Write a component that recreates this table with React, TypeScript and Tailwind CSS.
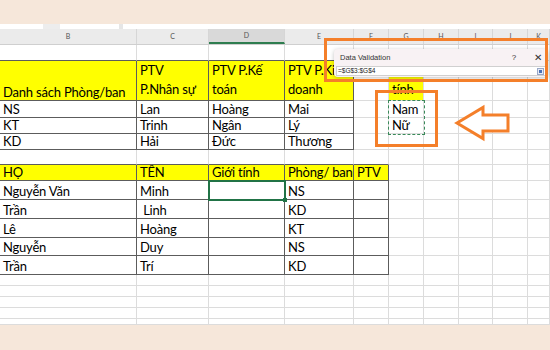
import React from "react";

const colW = [137, 72, 76, 69, 35, 35, 35, 34, 35, 22];
const colLetters = ["B", "C", "D", "E", "F", "G", "H", "I", "J", "K"];

type Cell = { t?: string; y?: boolean };
type Row = { h: number; cells?: Record<number, Cell> };

const rows: Row[] = [
  { h: 16 },
  {
    h: 40,
    cells: {
      0: { t: "Danh sách Phòng/ban", y: true },
      1: { t: "PTV\nP.Nhân sự", y: true },
      2: { t: "PTV P.Kế\ntoán", y: true },
      3: { t: "PTV P.Kinh\ndoanh", y: true },
      5: { t: "Giới\ntính", y: true },
    },
  },
  { h: 17, cells: { 0: { t: "NS" }, 1: { t: "Lan" }, 2: { t: "Hoàng" }, 3: { t: "Mai" }, 5: { t: "Nam" } } },
  { h: 16, cells: { 0: { t: "KT" }, 1: { t: "Trinh" }, 2: { t: "Ngân" }, 3: { t: "Lý" }, 5: { t: "Nữ" } } },
  { h: 16, cells: { 0: { t: "KD" }, 1: { t: "Hải" }, 2: { t: "Đức" }, 3: { t: "Thương" } } },
  { h: 15 },
  {
    h: 16,
    cells: {
      0: { t: "HỌ", y: true },
      1: { t: "TÊN", y: true },
      2: { t: "Giới tính", y: true },
      3: { t: "Phòng/ ban", y: true },
      4: { t: "PTV", y: true },
    },
  },
  { h: 19, cells: { 0: { t: "Nguyễn Văn" }, 1: { t: "Minh" }, 3: { t: "NS" } } },
  { h: 19, cells: { 0: { t: "Trần" }, 1: { t: " Linh" }, 3: { t: "KD" } } },
  { h: 19, cells: { 0: { t: "Lê" }, 1: { t: "Hoàng" }, 3: { t: "KT" } } },
  { h: 18, cells: { 0: { t: "Nguyễn" }, 1: { t: "Duy" }, 3: { t: "NS" } } },
  { h: 19, cells: { 0: { t: "Trần" }, 1: { t: "Trí" }, 3: { t: "KD" } } },
  { h: 11 },
  { h: 11 },
  { h: 11 },
  { h: 11 },
  { h: 6 },
];

function dark(r: number, c: number) {
  if (r >= 1 && r <= 4 && c >= 0 && c <= 3) return true;
  if (r >= 6 && r <= 11 && c >= 0 && c <= 4) return true;
  return false;
}

function GridCell({ r, c, row }: { r: number; c: number; row: Row }) {
  const cell = row.cells?.[c];
  const bDark = dark(r, c) || dark(r + 1, c);
  const rDark = dark(r, c) || dark(r, c + 1);
  const multi = cell?.t?.includes("\n");
  return (
    <div
      className={
        "shrink-0 flex items-end overflow-hidden border-b border-r " +
        (bDark ? "border-b-[#5c5c5c] " : "border-b-[#dcdcdc] ") +
        (rDark ? "border-r-[#5c5c5c] " : "border-r-[#dcdcdc] ") +
        (cell?.y ? "bg-[#ffff00]" : "bg-white")
      }
      style={{ width: colW[c], height: row.h }}
    >
      {cell?.t ? (
        <span
          className={
            "whitespace-pre pl-[3px] text-[13px] tracking-[-0.2px] text-black " +
            (multi ? "leading-[19px] pb-[1px]" : "leading-[16px]")
          }
        >
          {cell.t}
        </span>
      ) : null}
    </div>
  );
}

export default function App() {
  return (
    <div className="relative w-[550px] h-[350px] overflow-hidden bg-[#f6e7da] font-['Lato',sans-serif]">
      <div className="h-[24px]" />
      <div className="h-[5px] bg-white flex">
        <div className="w-[43px]" />
        <div className="w-[17px] bg-[#ededed]" />
        <div className="w-[59px]" />
        <div className="w-[4px] bg-[#e6e6e6]" />
      </div>
      <div className="flex h-[16px] bg-[#ebebeb] border-b border-[#cfcfcf]">
        {colLetters.map((l, i) => (
          <div
            key={l}
            className={
              "shrink-0 flex items-center justify-center text-[7px] text-[#555] border-r border-[#d6d6d6] " +
              (i === 2 ? "bg-[#d9d9d9] border-b-2 border-b-[#2e7d4f]" : "")
            }
            style={{ width: colW[i] }}
          >
            {l}
          </div>
        ))}
      </div>
      <div className="flex flex-col">
        {rows.map((row, r) => (
          <div key={r} className="flex">
            {colW.map((_, c) => (
              <GridCell key={c} r={r} c={c} row={row} />
            ))}
          </div>
        ))}
      </div>

      {/* selected cell */}
      <div className="absolute left-[208px] top-[180px] w-[78px] h-[21px] border-2 border-[#217346]" />
      <div className="absolute left-[283px] top-[198px] w-[4px] h-[4px] bg-[#217346]" />

      {/* copy marquee */}
      <div className="absolute left-[388px] top-[100px] w-[37px] h-[35px] border border-dashed border-[#3a8a5a]" />

      {/* orange box around G */}
      <div className="absolute left-[375px] top-[90px] w-[63px] h-[57px] border-[3px] border-[#f47f2a]" />

      {/* arrow */}
      <svg className="absolute left-[450px] top-[100px]" width="64" height="46" viewBox="0 0 64 46">
        <polygon
          points="7,23 33,7.5 33,15 58,15 58,31 33,31 33,38.5"
          fill="white"
          stroke="#f47f2a"
          strokeWidth="3"
          strokeLinejoin="miter"
        />
      </svg>

      {/* data validation dialog */}
      <div className="absolute left-[334px] top-[49px] w-[214px] h-[28px] rounded-[4px] bg-[#f8f2f4] shadow-[0_1px_4px_rgba(0,0,0,0.25)] flex flex-col">
        <div className="h-[17px] flex items-center px-[6px] text-[7.5px] text-[#333] font-['Liberation_Sans',sans-serif]">
          <span className="flex-1">Data Validation</span>
          <span className="w-[12px] text-center text-[8px]">?</span>
          <span className="w-[22px] text-right text-[10px] leading-none">✕</span>
        </div>
        <div className="mx-[2px] h-[10px] bg-white border border-[#d0d0d0] flex items-center">
          <span className="flex-1 pl-[1px] text-[6.5px] leading-none text-[#222] font-['Liberation_Sans',sans-serif]">
            =$G$3:$G$4
          </span>
          <div className="w-[7px] h-[7px] mr-[1px] border border-[#9aa8c8] bg-[#e4ebf7] flex items-center justify-center">
            <div className="w-[3px] h-[3px] bg-[#4a6fb5]" />
          </div>
        </div>
      </div>

      {/* orange box around dialog */}
      <div className="absolute left-[324px] top-[38px] w-[224px] h-[44px] border-[3px] border-[#f47f2a]" />
    </div>
  );
}
